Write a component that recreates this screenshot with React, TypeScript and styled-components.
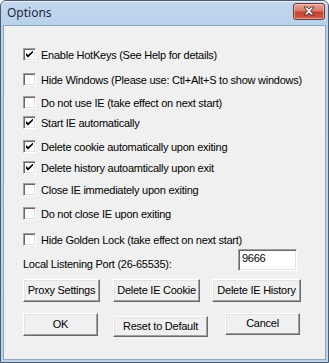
import React from 'react';
import styled, { createGlobalStyle } from 'styled-components';

const GlobalStyle = createGlobalStyle`
  html, body {
    margin: 0;
    padding: 0;
    background: #ffffff;
  }
`;

const Window = styled.div`
  box-sizing: border-box;
  width: 329px;
  height: 363px;
  display: flex;
  flex-direction: column;
  border: 1px solid #4c5b6e;
  border-radius: 6px 6px 0 0;
  background: linear-gradient(to bottom, #c2d6ee 0px, #b9d1ea 24px, #bcd3ec 100%);
  user-select: none;
`;

const TitleBar = styled.div`
  height: 24px;
  display: flex;
  align-items: center;
  justify-content: space-between;
  padding: 0 3px 0 6px;
  box-shadow: inset 0 1px 0 rgba(255, 255, 255, 0.6);
  border-radius: 5px 5px 0 0;
`;

const Title = styled.div`
  font-family: 'Noto Sans', sans-serif;
  font-size: 12px;
  color: #1e2a3a;
  padding-bottom: 1px;
`;

const CloseButton = styled.div`
  box-sizing: border-box;
  width: 32px;
  height: 17px;
  margin-top: -4px;
  display: flex;
  align-items: center;
  justify-content: center;
  border: 1px solid #6d3a3a;
  border-radius: 3px;
  background: linear-gradient(to bottom, #e8a89c 0%, #d7796a 45%, #c2402f 55%, #d0604c 100%);
  box-shadow: inset 0 0 0 1px rgba(255, 210, 200, 0.55);
`;

const Client = styled.div`
  flex: 1;
  margin: 0 2px 2px 2px;
  background: #f0f0f0;
  border: 1px solid #8ea4bf;
  display: flex;
  flex-direction: column;
  padding: 0 0 0 19px;
  font-family: 'Liberation Sans', Arial, sans-serif;
  font-size: 11px;
  letter-spacing: -0.25px;
  color: #000000;
`;

const OptionRow = styled.label<{ gap: number }>`
  display: flex;
  align-items: center;
  height: 13px;
  margin-top: ${({ gap }) => gap}px;
  gap: 5px;
  white-space: nowrap;
`;

const Box = styled.span`
  box-sizing: border-box;
  width: 13px;
  height: 13px;
  flex: none;
  display: flex;
  align-items: center;
  justify-content: center;
  background: #ffffff;
  border-style: solid;
  border-width: 1px;
  border-color: #a0a0a0 #ffffff #ffffff #a0a0a0;
  box-shadow: inset 1px 1px 0 #696969, inset -1px -1px 0 #e3e3e3;
`;

const PortRow = styled.div`
  display: flex;
  align-items: center;
  justify-content: space-between;
  margin-top: 3px;
  padding-right: 28px;
`;

const PortLabel = styled.span`
  padding-top: 7px;
`;

const PortInput = styled.div`
  box-sizing: border-box;
  width: 59px;
  height: 22px;
  background: #ffffff;
  border-style: solid;
  border-width: 1px;
  border-color: #a0a0a0 #ffffff #ffffff #a0a0a0;
  box-shadow: inset 1px 1px 0 #696969, inset -1px -1px 0 #e3e3e3;
  padding: 2px 0 0 3px;
`;

const ButtonRow = styled.div<{ gap: number }>`
  display: flex;
  align-items: flex-start;
  margin-top: ${({ gap }) => gap}px;
`;

const Button = styled.div<{ w: number; h: number; left: number; top?: number }>`
  box-sizing: border-box;
  width: ${({ w }) => w}px;
  height: ${({ h }) => h}px;
  margin-left: ${({ left }) => left}px;
  margin-top: ${({ top }) => top || 0}px;
  display: flex;
  align-items: center;
  justify-content: center;
  background: #f0f0f0;
  border-style: solid;
  border-width: 1px;
  border-color: #ffffff #696969 #696969 #ffffff;
  box-shadow: inset -1px -1px 0 #a0a0a0, inset 1px 1px 0 #e3e3e3;
  white-space: nowrap;
  padding-bottom: 2px;
`;

const Check = () => (
  <svg width="7" height="7" viewBox="0 0 7 7">
    <path d="M0 2 L0 4.5 L2 6.5 L7 1.5 L7 -0.5 L2 4 Z" fill="#000" />
  </svg>
);

const CloseGlyph = () => (
  <svg width="12" height="10" viewBox="0 0 12 10">
    <path
      d="M1 1 H4 L6 3.2 L8 1 H11 L7.6 5 L11 9 H8 L6 6.8 L4 9 H1 L4.4 5 Z"
      fill="#ffffff"
      stroke="#4a2a2a"
      strokeWidth="0.9"
      strokeLinejoin="round"
    />
  </svg>
);

type Option = { text: string; checked: boolean; gap: number };

const OPTIONS: Option[] = [
  { text: 'Enable HotKeys (See Help for details)', checked: true, gap: 22 },
  { text: 'Hide Windows (Please use: Ctl+Alt+S to show windows)', checked: false, gap: 12 },
  { text: 'Do not use IE (take effect on next start)', checked: false, gap: 10 },
  { text: 'Start IE automatically', checked: true, gap: 7 },
  { text: 'Delete cookie automatically upon exiting', checked: true, gap: 11 },
  { text: 'Delete history autoamtically upon exit', checked: true, gap: 8 },
  { text: 'Close IE immediately upon exiting', checked: false, gap: 9 },
  { text: 'Do not close IE upon exiting', checked: false, gap: 11 },
  { text: 'Hide Golden Lock (take effect on next start)', checked: false, gap: 13 },
];

const App = () => (
  <>
    <GlobalStyle />
    <Window>
      <TitleBar>
        <Title>Options</Title>
        <CloseButton>
          <CloseGlyph />
        </CloseButton>
      </TitleBar>
      <Client>
        {OPTIONS.map((opt) => (
          <OptionRow key={opt.text} gap={opt.gap}>
            <Box>{opt.checked && <Check />}</Box>
            <span>{opt.text}</span>
          </OptionRow>
        ))}
        <PortRow>
          <PortLabel>Local Listening Port (26-65535):</PortLabel>
          <PortInput>9666</PortInput>
        </PortRow>
        <ButtonRow gap={8}>
          <Button w={77} h={23} left={0}>Proxy Settings</Button>
          <Button w={87} h={23} left={13}>Delete IE Cookie</Button>
          <Button w={89} h={23} left={12}>Delete IE History</Button>
        </ButtonRow>
        <ButtonRow gap={11}>
          <Button w={75} h={23} left={0}>OK</Button>
          <Button w={95} h={21} left={15} top={3}>Reset to Default</Button>
          <Button w={75} h={22} left={17}>Cancel</Button>
        </ButtonRow>
      </Client>
    </Window>
  </>
);

export default App;
